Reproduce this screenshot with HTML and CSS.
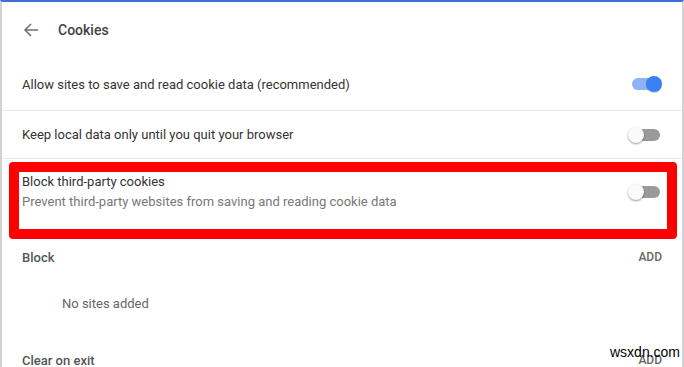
FILE: index.html
```html
<!DOCTYPE html>
<html>
<head>
<meta charset="utf-8">
<link rel="stylesheet" href="styles.css">
</head>
<body>
<div class="page">
  <div class="header">
    <svg class="back" width="16" height="16" viewBox="0 0 16 16"><path d="M15 8H2M8 2L2 8l6 6" fill="none" stroke="#6f6f6f" stroke-width="1.5"/></svg>
    <span class="title">Cookies</span>
  </div>
  <div class="row row1">
    <span class="label">Allow sites to save and read cookie data (recommended)</span>
    <span class="toggle on"><span class="knob"></span></span>
  </div>
  <div class="row row2">
    <span class="label">Keep local data only until you quit your browser</span>
    <span class="toggle"><span class="knob"></span></span>
  </div>
  <div class="highlight">
    <div class="texts">
      <div class="label">Block third-party cookies</div>
      <div class="sub">Prevent third-party websites from saving and reading cookie data</div>
    </div>
    <span class="toggle"><span class="knob"></span></span>
  </div>
  <div class="section">
    <span class="head">Block</span>
    <span class="add">ADD</span>
  </div>
  <div class="empty">No sites added</div>
  <div class="section last">
    <span class="head">Clear on exit</span>
    <span class="add">ADD</span>
  </div>
  <div class="watermark">wsxdn.com</div>
</div>
</body>
</html>
```
FILE: styles.css
```css
html, body {
  margin: 0;
  padding: 0;
  background: #fff;
}
body {
  font-family: Roboto, "Liberation Sans", sans-serif;
  font-size: 13px;
  color: #333;
  overflow: hidden;
}
.page {
  position: relative;
  height: 367px;
  box-sizing: border-box;
  border-top: 2px solid #3a6fd8;
  border-left: 2px solid #d2d2d2;
  border-right: 2px solid #d2d2d2;
  overflow: hidden;
}
.header {
  height: 56px;
  display: flex;
  align-items: center;
  padding-left: 21px;
}
.back {
  display: block;
}
.title {
  margin-left: 19px;
  font-size: 14px;
  font-weight: 500;
  color: #444;
}
.row {
  display: flex;
  align-items: center;
  justify-content: space-between;
  padding: 0 22px 0 20px;
  border-bottom: 1px solid #e8e8e8;
}
.row1 {
  height: 52px;
}
.row2 {
  height: 47px;
}
.toggle {
  position: relative;
  width: 28px;
  height: 12px;
  border-radius: 6px;
  background: #9a9a9a;
}
.toggle .knob {
  position: absolute;
  top: -2px;
  left: -4px;
  width: 16px;
  height: 16px;
  border-radius: 50%;
  background: #fafafa;
  box-shadow: 0 1px 2px rgba(0,0,0,0.4);
}
.toggle.on {
  background: #8fb1f5;
}
.toggle.on .knob {
  left: 14px;
  background: #3b80f3;
  box-shadow: 0 1px 1px rgba(0,0,0,0.2);
}
.highlight {
  margin: 3px 5px 0 7px;
  border: 10px solid #ff0000;
  border-radius: 4px;
  height: 55px;
  display: flex;
  justify-content: space-between;
  padding: 2px 7px 0 3px;
}
.highlight .toggle {
  margin-top: 12px;
}
.texts .label {
  line-height: 16px;
}
.sub {
  color: #777;
  margin-top: 4px;
  line-height: 16px;
}
.section {
  display: flex;
  justify-content: space-between;
  align-items: center;
  padding: 0 20px 0 20px;
  height: 40px;
  margin-top: -2px;
}
.head {
  font-weight: 500;
  color: #555;
}
.add {
  font-weight: 500;
  color: #666;
  font-size: 12px;
}
.empty {
  padding-left: 60px;
  height: 54px;
  line-height: 54px;
  color: #666;
}
.section.last {
  margin-top: 9px;
}
.watermark {
  position: absolute;
  left: 608px;
  top: 342px;
  font-family: "Liberation Sans", Arial, sans-serif;
  font-size: 14px;
  color: #000;
}
```
